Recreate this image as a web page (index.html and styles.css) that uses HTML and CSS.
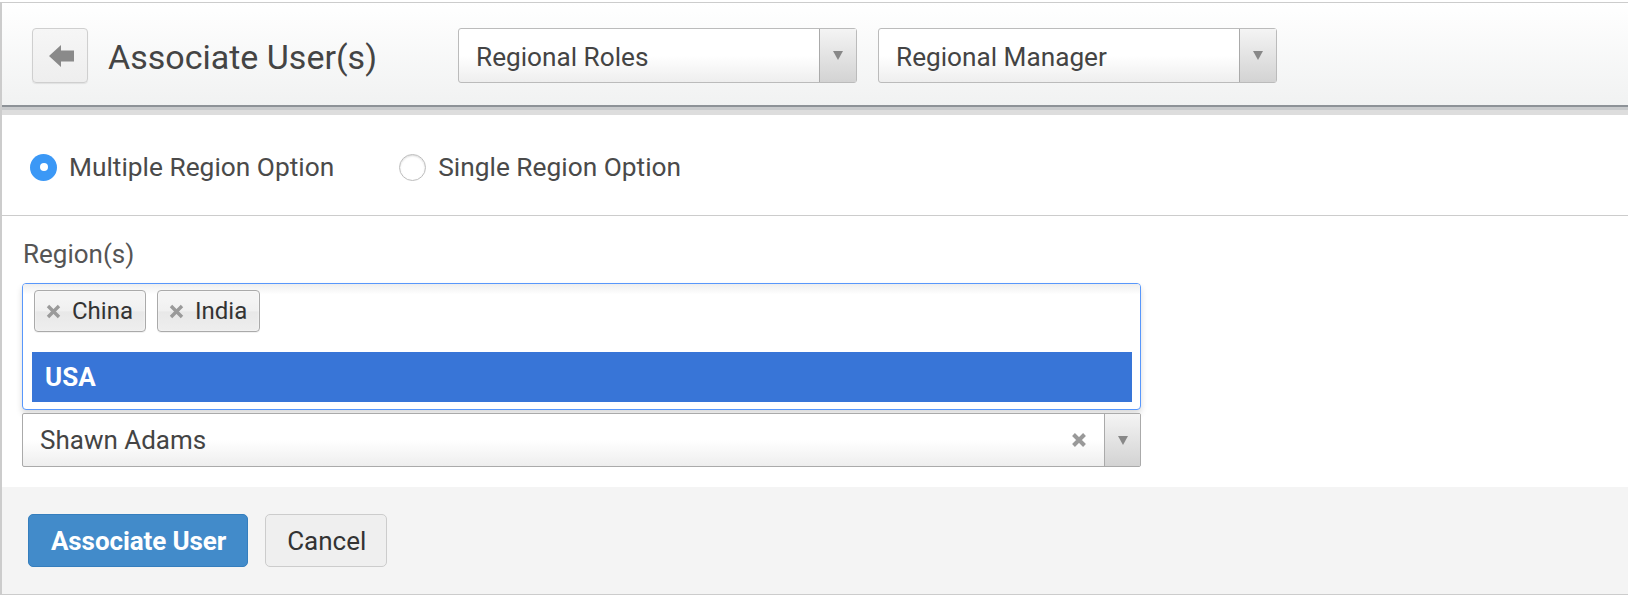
FILE: index.html
```html
<!DOCTYPE html>
<html>
<head>
<meta charset="utf-8">
<link rel="stylesheet" href="styles.css">
</head>
<body>
<div class="panel">
  <header class="header">
    <button class="back-btn" aria-label="Back">
      <svg width="25" height="22" viewBox="0 0 25 22"><polygon points="0,11 12,0 12,5.5 25,5.5 25,16.5 12,16.5 12,22" fill="#8a8a8a"/></svg>
    </button>
    <h1 class="title">Associate User(s)</h1>
    <div class="select">
      <span class="select-text">Regional Roles</span>
      <span class="select-arrow"><span class="tri"></span></span>
    </div>
    <div class="select">
      <span class="select-text">Regional Manager</span>
      <span class="select-arrow"><span class="tri"></span></span>
    </div>
  </header>
  <div class="header-rule"></div>

  <div class="radio-row">
    <label class="radio-opt first"><span class="radio checked"></span><span class="radio-label">Multiple Region Option</span></label>
    <label class="radio-opt"><span class="radio"></span><span class="radio-label">Single Region Option</span></label>
  </div>

  <section class="form">
    <div class="field-label">Region(s)</div>
    <div class="multi">
      <div class="choices">
        <span class="tag"><svg class="tag-x" width="15" height="15" viewBox="0 0 15 15"><path d="M2 2L13 13M13 2L2 13" stroke="#9a9a9a" stroke-width="3.4"/></svg><span>China</span></span>
        <span class="tag"><svg class="tag-x" width="15" height="15" viewBox="0 0 15 15"><path d="M2 2L13 13M13 2L2 13" stroke="#9a9a9a" stroke-width="3.4"/></svg><span>India</span></span>
      </div>
      <ul class="results">
        <li class="result highlighted">USA</li>
      </ul>
    </div>
    <div class="single">
      <span class="single-text">Shawn Adams</span>
      <svg class="clear-x" width="16" height="16" viewBox="0 0 16 16"><path d="M2.5 2.5L13.5 13.5M13.5 2.5L2.5 13.5" stroke="#999" stroke-width="4"/></svg>
      <span class="select-arrow small"><span class="tri"></span></span>
    </div>
  </section>

  <footer class="footer">
    <button class="btn btn-primary">Associate User</button>
    <button class="btn btn-default">Cancel</button>
  </footer>
</div>
</body>
</html>
```

FILE: styles.css
```css
* { box-sizing: border-box; }
html, body { margin: 0; padding: 0; background: #fff; }
body {
  padding-top: 2px;
  font-family: Roboto, "Liberation Sans", Arial, sans-serif;
  color: #444;
  overflow: hidden;
}
.panel {
  border-top: 1px solid #cccccc;
  border-left: 2px solid #cccccc;
  border-bottom: 1px solid #cccccc;
}

/* Header */
.header {
  height: 104px;
  display: flex;
  align-items: flex-start;
  padding: 25px 0 0 30px;
  background: linear-gradient(#ffffff, #f1f2f2);
  border-bottom: 2px solid #8d9297;
}
.back-btn {
  width: 56px;
  height: 55px;
  margin: 0;
  padding: 0 0 0 2px;
  border: 1px solid #cfcfcf;
  border-radius: 4px;
  background: linear-gradient(#f6f6f6, #eeeeee);
  box-shadow: 0 1px 1px rgba(0,0,0,0.08);
  display: flex;
  align-items: center;
  justify-content: center;
}
.title {
  margin: 0 0 0 20px;
  width: 350px;
  height: 55px;
  padding-top: 2px;
  line-height: 55px;
  font-size: 34px;
  font-weight: 400;
  color: #444;
  white-space: nowrap;
}
.select {
  width: 399px;
  height: 55px;
  margin-right: 21px;
  display: flex;
  border: 1px solid #bbbbbb;
  border-radius: 3px;
  background: linear-gradient(#ffffff 0%, #ffffff 50%, #eeeeee 100%);
}
.select-text {
  flex: 1;
  padding: 2px 0 0 17px;
  line-height: 53px;
  font-size: 26.2px;
  color: #444;
}
.select-arrow {
  width: 37px;
  display: flex;
  align-items: center;
  justify-content: center;
  border-left: 1px solid #aaaaaa;
  background: linear-gradient(#f4f4f4, #d3d3d3);
}
.select-arrow.small { width: 36px; }
.tri {
  width: 0; height: 0;
  border-left: 5px solid transparent;
  border-right: 5px solid transparent;
  border-top: 9px solid #888;
}
.header-rule {
  height: 8px;
  background: linear-gradient(#c8cacc 0, #c8cacc 3px, #dddddd 3px, #dddddd 100%);
}

/* Radio row */
.radio-row {
  height: 101px;
  padding: 4px 0 0 28px;
  display: flex;
  align-items: center;
  border-bottom: 1px solid #cccccc;
}
.radio-opt {
  display: flex;
  align-items: center;
  gap: 12px;
}
.radio-opt.first { margin-right: 65px; }
.radio {
  width: 27px;
  height: 27px;
  border-radius: 50%;
  border: 1px solid #bdbdbd;
  background: #fff;
  box-shadow: inset 0 1px 2px rgba(0,0,0,0.15);
  display: flex;
  align-items: center;
  justify-content: center;
}
.radio.checked {
  border: none;
  background: #3b98f6;
  box-shadow: none;
}
.radio.checked::after {
  content: "";
  width: 8px;
  height: 8px;
  border-radius: 50%;
  background: #fff;
}
.radio-label {
  font-size: 26.3px;
  color: #4a4a4a;
}

/* Form */
.form {
  padding: 23px 0 20px 20px;
}
.field-label {
  font-size: 26px;
  line-height: 30px;
  color: #555;
  padding-left: 1px;
}
.multi {
  margin-top: 14px;
  width: 1119px;
  height: 127px;
  border: 1px solid #5897fb;
  border-radius: 4px;
  background: #fff;
  box-shadow: 0 4px 6px rgba(0,0,0,0.15);
}
.choices {
  height: 58px;
  padding: 6px 0 0 11px;
  display: flex;
  gap: 11px;
  background: linear-gradient(#eeeeee 0%, #ffffff 18%);
  border-radius: 3px 3px 0 0;
}
.tag {
  height: 42px;
  display: flex;
  align-items: center;
  padding: 0 12px 0 11px;
  border: 1px solid #aaaaaa;
  border-radius: 4px;
  background: linear-gradient(#f4f4f4 20%, #f0f0f0 50%, #e8e8e8 52%, #eeeeee 100%);
  box-shadow: inset 0 0 2px #fff, 0 1px 0 rgba(0,0,0,0.05);
  font-size: 24px;
  color: #333;
}
.tag-x { margin-right: 11px; }
.results {
  list-style: none;
  margin: 10px 8px 0 9px;
  padding: 0;
}
.result {
  height: 50px;
  line-height: 50px;
  padding-left: 13px;
  font-size: 26px;
}
.result.highlighted {
  background: #3875d7;
  color: #fff;
  font-weight: 700;
}
.single {
  margin-top: 3px;
  width: 1119px;
  height: 54px;
  display: flex;
  align-items: center;
  border: 1px solid #aaaaaa;
  border-radius: 2px;
  background: linear-gradient(#ffffff 0%, #ffffff 50%, #eeeeee 100%);
}
.single-text {
  flex: 1;
  padding-left: 17px;
  font-size: 26px;
  color: #444;
}
.clear-x { margin-right: 17px; }
.single .select-arrow { align-self: stretch; }

/* Footer */
.footer {
  background: #f4f4f4;
  padding: 27px 0 27px 26px;
  display: flex;
  gap: 17px;
}
.btn {
  height: 53px;
  margin: 0;
  border-radius: 5px;
  font-family: Roboto, "Liberation Sans", Arial, sans-serif;
  font-size: 26px;
  cursor: pointer;
}
.btn-primary {
  padding: 0 21px 0 22px;
  background: #428bca;
  border: 1px solid #357ebd;
  color: #fff;
  font-weight: 700;
  letter-spacing: -0.1px;
}
.btn-default {
  padding: 0 20px 0 21px;
  background: #efefef;
  border: 1px solid #cccccc;
  color: #333;
}
```
